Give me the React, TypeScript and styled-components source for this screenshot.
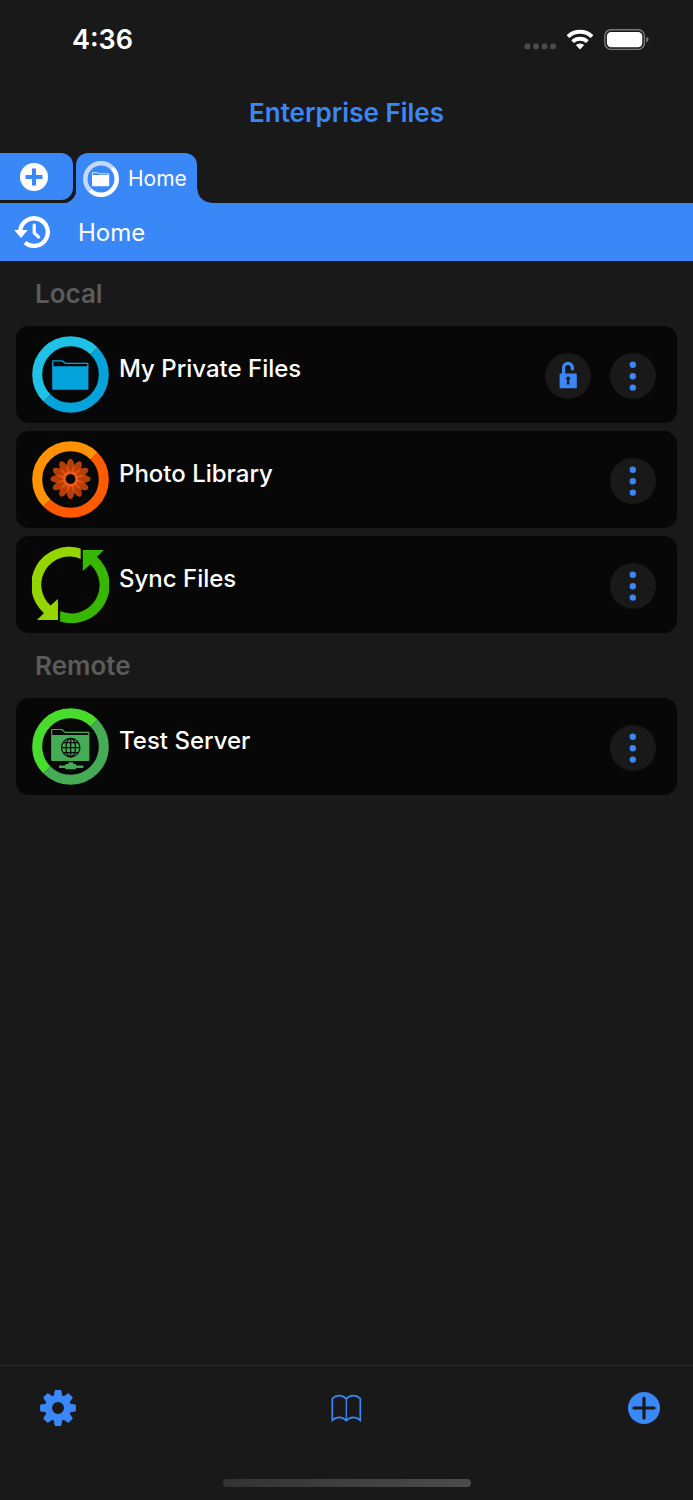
import React from "react";
import styled, { createGlobalStyle } from "styled-components";

const colors = {
  page: "#191919",
  card: "#070707",
  accent: "#3a87f7",
  muted: "#5b5b5b",
};

const GlobalStyle = createGlobalStyle`
  * { box-sizing: border-box; }
  body {
    margin: 0;
    background: ${colors.page};
    color: #fff;
    font-family: Inter, "Liberation Sans", sans-serif;
  }
  svg { display: block; flex: none; }
`;

const Screen = styled.div`
  display: flex;
  flex-direction: column;
  min-height: 100vh;
`;

const StatusBar = styled.header`
  display: flex;
  align-items: center;
  justify-content: space-between;
  height: 80px;
  padding: 0 44px 0 72px;
`;

const Clock = styled.time`
  font-size: 27px;
  line-height: 32px;
  font-weight: 600;
`;

const StatusIcons = styled.div`
  display: flex;
  align-items: center;
  gap: 10px;
`;

const Title = styled.h1`
  margin: 0;
  padding: 17px 0 24px;
  color: ${colors.accent};
  font-size: 26px;
  line-height: 32px;
  font-weight: 600;
  text-align: center;
`;

const TabStrip = styled.nav`
  display: flex;
  align-items: flex-start;
  gap: 3px;
  height: 50px;
`;

const IconButton = styled.button`
  display: flex;
  align-items: center;
  justify-content: center;
  padding: 0;
  border: 0;
  background: none;
  color: ${colors.accent};
  cursor: pointer;
`;

const NewTabButton = styled(IconButton)`
  width: 73px;
  height: 47px;
  padding-right: 5px;
  border-radius: 0 12px 12px 0;
  background: ${colors.accent};
  color: #fff;
`;

const Tab = styled.button`
  position: relative;
  display: flex;
  align-items: center;
  gap: 9px;
  height: 50px;
  padding: 2px 10px 0 7px;
  border: 0;
  border-radius: 12px 12px 0 0;
  background: ${colors.accent};
  color: #fff;
  font: 400 21px/28px Inter, "Liberation Sans", sans-serif;
  cursor: pointer;

  &::before,
  &::after {
    content: "";
    position: absolute;
    bottom: 0;
    width: 14px;
    height: 14px;
  }
  &::before {
    right: 100%;
    background: radial-gradient(circle at 0 0, transparent 14px, ${colors.accent} 15px);
  }
  &::after {
    left: 100%;
    background: radial-gradient(circle at 100% 0, transparent 13px, ${colors.accent} 14px);
  }
`;

const PathBar = styled.div`
  display: flex;
  align-items: center;
  gap: 28px;
  height: 58px;
  padding-left: 14px;
  background: ${colors.accent};
  font-size: 24px;
  line-height: 32px;
`;

const PathName = styled.span`
  padding-top: 2px;
`;

const Content = styled.main`
  flex: 1;
  padding: 0 16px;
`;

const SectionTitle = styled.h2`
  margin: 0;
  padding: 17px 19px 16px;
  color: ${colors.muted};
  font-size: 26px;
  line-height: 32px;
  font-weight: 600;
`;

const List = styled.ul`
  display: flex;
  flex-direction: column;
  gap: 8px;
  margin: 0;
  padding: 0;
  list-style: none;
`;

const Card = styled.li`
  display: flex;
  align-items: center;
  gap: 10px;
  padding: 10px 21px 10px 16px;
  border-radius: 13px;
  background: ${colors.card};
`;

const CardName = styled.span`
  flex: 1;
  padding-bottom: 12px;
  font-size: 24px;
  line-height: 32px;
  font-weight: 500;
`;

const CardActions = styled.div`
  display: flex;
  gap: 19px;
  padding-top: 2px;
`;

const RoundButton = styled(IconButton)`
  width: 46px;
  height: 46px;
  border-radius: 50%;
  background: ${colors.page};
`;

const Toolbar = styled.footer`
  padding: 19px 33px 13px;
  border-top: 1px solid #2b2b2b;
`;

const ToolbarRow = styled.div`
  display: grid;
  grid-template-columns: 1fr auto 1fr;
  align-items: center;
  height: 46px;
`;

const ToolbarButton = styled(IconButton)<{ $align: "start" | "center" | "end" }>`
  justify-self: ${(p) => p.$align};
  height: 46px;
  padding: ${(p) => (p.$align === "start" ? "0 7px" : "0")};
`;

const HomeIndicator = styled.div`
  width: 248px;
  height: 8px;
  margin: 48px auto 0;
  border-radius: 4px;
  background: linear-gradient(90deg, #323232, #4c4c4c);
`;

const SignalIcon = () => (
  <svg width="32" height="20" viewBox="0 0 32 20" fill="#4b4b4b" aria-hidden="true">
    {[0.6, 9.2, 17.8, 26.2].map((x) => (
      <rect key={x} x={x} y="13.5" width="5.6" height="5.8" rx="1.8" />
    ))}
  </svg>
);

const WifiIcon = () => (
  <svg width="28" height="22" viewBox="0 0 28 22" fill="none" stroke="#fff" strokeWidth="4" aria-hidden="true">
    <path d="M2 7.6a17.4 17.4 0 0 1 24 0" />
    <path d="M6.6 12.6a10.8 10.8 0 0 1 14.8 0" />
    <path d="M14 20.4 9.8 16.1a6.2 6.2 0 0 1 8.4 0z" fill="#fff" stroke="none" />
  </svg>
);

const BatteryIcon = () => (
  <svg width="45" height="22" viewBox="0 0 45 22" aria-hidden="true">
    <rect x=".8" y=".8" width="39.6" height="19.6" rx="6.2" fill="none" stroke="#7b7b7b" strokeWidth="1.4" />
    <rect x="2.9" y="2.9" width="35.4" height="15.4" rx="4.2" fill="#fff" />
    <path d="M42.2 7.8c1.6.6 2.4 1.6 2.4 2.8s-.8 2.2-2.4 2.8z" fill="#7b7b7b" />
  </svg>
);

const TabAddIcon = () => (
  <svg width="28" height="28" viewBox="0 0 28 28" aria-hidden="true">
    <circle cx="14" cy="14" r="14" fill="#fff" />
    <path d="M14 5.5v17M5.5 14h17" stroke={colors.accent} strokeWidth="4" />
  </svg>
);

type RingProps = { center: number; radius: number; width: number; light: string; dark: string };

// Two half circles that meet on the diagonal; each is one dash of half the circumference.
const Ring = ({ center, radius, width, light, dark }: RingProps) => (
  <g fill="none" strokeWidth={width} strokeDasharray="50 50">
    <circle
      cx={center}
      cy={center}
      r={radius}
      pathLength={100}
      stroke={dark}
      transform={`rotate(-45 ${center} ${center})`}
    />
    <circle
      cx={center}
      cy={center}
      r={radius}
      pathLength={100}
      stroke={light}
      transform={`rotate(135 ${center} ${center})`}
    />
  </g>
);

const CardRing = ({ light, dark }: { light: string; dark: string }) => (
  <Ring center={38.5} radius={33.3} width={10} light={light} dark={dark} />
);

const TabHomeIcon = () => (
  <svg width="36" height="36" viewBox="0 0 36 36" aria-hidden="true">
    <Ring center={18} radius={15.7} width={4.5} light="#c3dafc" dark="#fff" />
    <path d="M9.4 14v-2.4h5l1.4 1.2h10V14" fill="none" stroke="#fff" strokeWidth=".8" />
    <rect x="9" y="14" width="17.2" height="11.3" rx=".6" fill="#fff" />
  </svg>
);

const HistoryIcon = () => (
  <svg width="36" height="32" viewBox="0 0 36 32" fill="none" stroke="#fff" aria-hidden="true">
    <path d="M6.2 15.2A13.8 13.8 0 1 1 11 26.6" strokeWidth="4.3" />
    <path d="M.2 14.1h13.6L7 21.9z" fill="#fff" stroke="none" />
    <path d="M20.2 9.2v7.6l4.4 4.2" strokeWidth="3.2" strokeLinecap="round" strokeLinejoin="round" />
  </svg>
);

const FolderIcon = () => (
  <svg width="77" height="77" viewBox="0 0 77 77" aria-hidden="true">
    <CardRing light="#1fc1e6" dark="#04a3dc" />
    <path
      d="M20.8 31v-6.2h9.3l3.2 2.5h22.5V31"
      fill="none"
      stroke="#04a3dc"
      strokeWidth="1.3"
      strokeLinejoin="round"
    />
    <rect x="20.2" y="30.3" width="36.2" height="23.4" rx="1" fill="#04a3dc" />
  </svg>
);

const PhotoIcon = () => (
  <svg width="77" height="77" viewBox="0 0 77 77" aria-hidden="true">
    <CardRing light="#ff9304" dark="#ff5a00" />
    {Array.from({ length: 12 }, (_, i) => (
      <ellipse
        key={i}
        cx="38.5"
        cy="25.8"
        rx="3.9"
        ry="8"
        fill="#ff5608"
        fillOpacity=".7"
        transform={`rotate(${i * 30} 38.5 38)`}
      />
    ))}
    <circle cx="38.5" cy="38" r="6.2" fill="none" stroke="#ff6220" strokeOpacity=".7" strokeWidth="3" />
    <circle cx="38.5" cy="38" r="4.8" fill={colors.card} />
  </svg>
);

const SyncIcon = () => {
  const arrow = "M49.3 1.6A38.5 38.5 0 0 0 12 67L5 74h21.3V52.7l-7.6 6.6A28.5 28.5 0 0 1 49.3 12.1z";
  return (
    <svg width="77" height="77" viewBox="0 -1 78 78" aria-hidden="true">
      <path d={arrow} fill="#96d600" />
      <path d={arrow} fill="#38b700" transform="rotate(180 38.9 38.5)" />
    </svg>
  );
};

const ServerIcon = () => (
  <svg width="77" height="77" viewBox="0 0 77 77" aria-hidden="true">
    <CardRing light="#48dc2c" dark="#43ac55" />
    <path
      d="M19.7 27.5v-6h10.2l3 2.9h23.9v3"
      fill="none"
      stroke="#43ac55"
      strokeWidth="1.2"
      strokeLinejoin="round"
    />
    <rect x="19.1" y="27" width="38.3" height="26" rx="1" fill="#43ac55" />
    <g fill="none" stroke={colors.card} strokeWidth="1.2">
      <circle cx="38.7" cy="39.6" r="9.2" />
      <ellipse cx="38.7" cy="39.6" rx="4.8" ry="9.2" />
      <path d="M38.7 30.4v18.4M29.5 39.6h18.4M31 34.6h15.4M31 44.6h15.4" />
    </g>
    <path d="M36.4 54.2h4.8v1.8h2.4l.8 1.4h7V60h-7l-.8 1.2h-9.8L33 60h-6v-2.6h6l.8-1.4h2.6z" fill="#43ac55" />
  </svg>
);

const UnlockIcon = () => (
  <svg width="46" height="46" viewBox="0 0 46 46" aria-hidden="true">
    <path d="M18.6 21.5v-6.8a4.4 4.4 0 0 1 8.8 0v2.6" fill="none" stroke={colors.accent} strokeWidth="3.2" />
    <rect x="14.6" y="20.4" width="17.2" height="14.8" rx="1" fill={colors.accent} />
    <circle cx="23.1" cy="25.6" r="2" fill={colors.page} />
    <path d="M22.4 26h1.4l.7 5.4h-2.8z" fill={colors.page} />
  </svg>
);

const MoreIcon = () => (
  <svg width="46" height="46" viewBox="0 0 46 46" fill={colors.accent} aria-hidden="true">
    <circle cx="22.8" cy="11.7" r="3.2" />
    <circle cx="22.8" cy="23.2" r="3.2" />
    <circle cx="22.8" cy="34.6" r="3.2" />
  </svg>
);

const GearIcon = () => (
  <svg width="36" height="36" viewBox="0 0 36 36" fill={colors.accent} aria-hidden="true">
    {Array.from({ length: 8 }, (_, i) => (
      <path
        key={i}
        d="M13.4 7.5 14.6.9Q14.8.1 15.6.1h4.8q.8 0 1 .8L22.6 7.5z"
        transform={`rotate(${i * 45} 18 18)`}
      />
    ))}
    <circle cx="18" cy="18" r="9.5" fill="none" stroke={colors.accent} strokeWidth="7" />
  </svg>
);

const BookIcon = () => (
  <svg width="31" height="28" viewBox="0 0 31 28" fill="none" stroke={colors.accent} strokeWidth="1.7" aria-hidden="true">
    <path d="M1.3 26.3V4.6C5.3.6 11.3.6 15.3 5c4-4.4 10-4.4 14-.4v21.7c-4-4-10-4-14 .3-4-4.3-10-4.3-14-.3z" />
    <path d="M15.3 5v22" strokeWidth="1.3" />
  </svg>
);

const AddIcon = () => (
  <svg width="32" height="32" viewBox="0 0 32 32" aria-hidden="true">
    <circle cx="16" cy="16" r="16" fill={colors.accent} />
    <path d="M16 6v20M6 16h20" stroke={colors.page} strokeWidth="3.2" strokeLinecap="round" />
  </svg>
);

type Item = { name: string; Icon: () => React.JSX.Element; unlocked?: boolean };

const sections: { title: string; items: Item[] }[] = [
  {
    title: "Local",
    items: [
      { name: "My Private Files", Icon: FolderIcon, unlocked: true },
      { name: "Photo Library", Icon: PhotoIcon },
      { name: "Sync Files", Icon: SyncIcon },
    ],
  },
  { title: "Remote", items: [{ name: "Test Server", Icon: ServerIcon }] },
];

export default function App() {
  return (
    <Screen>
      <GlobalStyle />
      <StatusBar>
        <Clock>4:36</Clock>
        <StatusIcons>
          <SignalIcon />
          <WifiIcon />
          <BatteryIcon />
        </StatusIcons>
      </StatusBar>
      <Title>Enterprise Files</Title>
      <TabStrip>
        <NewTabButton aria-label="New tab">
          <TabAddIcon />
        </NewTabButton>
        <Tab>
          <TabHomeIcon />
          Home
        </Tab>
      </TabStrip>
      <PathBar>
        <IconButton aria-label="History">
          <HistoryIcon />
        </IconButton>
        <PathName>Home</PathName>
      </PathBar>
      <Content>
        {sections.map(({ title, items }) => (
          <section key={title}>
            <SectionTitle>{title}</SectionTitle>
            <List>
              {items.map(({ name, Icon, unlocked }) => (
                <Card key={name}>
                  <Icon />
                  <CardName>{name}</CardName>
                  <CardActions>
                    {unlocked && (
                      <RoundButton aria-label={`Lock ${name}`}>
                        <UnlockIcon />
                      </RoundButton>
                    )}
                    <RoundButton aria-label={`More options for ${name}`}>
                      <MoreIcon />
                    </RoundButton>
                  </CardActions>
                </Card>
              ))}
            </List>
          </section>
        ))}
      </Content>
      <Toolbar>
        <ToolbarRow>
          <ToolbarButton $align="start" aria-label="Settings">
            <GearIcon />
          </ToolbarButton>
          <ToolbarButton $align="center" aria-label="Bookmarks">
            <BookIcon />
          </ToolbarButton>
          <ToolbarButton $align="end" aria-label="Add">
            <AddIcon />
          </ToolbarButton>
        </ToolbarRow>
        <HomeIndicator />
      </Toolbar>
    </Screen>
  );
}
